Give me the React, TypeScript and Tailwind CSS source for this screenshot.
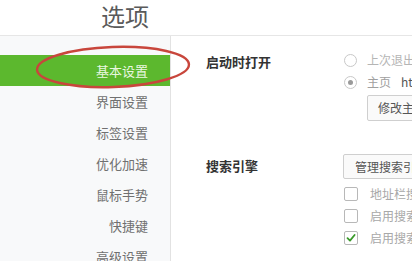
import React from "react";

const font = { fontFamily: '"Noto Sans CJK SC", "Noto Sans", sans-serif' };

const items = ["基本设置", "界面设置", "标签设置", "优化加速", "鼠标手势", "快捷键", "高级设置"];

function Radio({ checked }: { checked?: boolean }) {
  return (
    <span className="flex h-[13px] w-[13px] shrink-0 items-center justify-center rounded-full border border-[#c8c8c8] bg-white">
      {checked && <span className="h-[5px] w-[5px] rounded-full bg-[#9a9a9a]" />}
    </span>
  );
}

function Check({ checked }: { checked?: boolean }) {
  return (
    <span className="flex h-[14px] w-[14px] shrink-0 items-center justify-center rounded-[2px] border border-[#b8b8b8] bg-white">
      {checked && (
        <svg width="10" height="10" viewBox="0 0 10 10">
          <path d="M1.5 5.2 L4 7.6 L8.6 2" fill="none" stroke="#3a9a2a" strokeWidth="1.8" strokeLinecap="round" strokeLinejoin="round" />
        </svg>
      )}
    </span>
  );
}

export default function App() {
  return (
    <div className="relative h-[261px] w-[412px] overflow-hidden whitespace-nowrap bg-white" style={font}>
      <div className="h-[36px] border-b border-[#e6e6e6] pl-[101px] pt-[1px] text-[24px] leading-[30px] text-[#5a5a5a]">
        选项
      </div>
      <div className="flex h-[225px]">
        <div className="w-[171px] shrink-0 border-r border-[#e2e2e2] bg-[#f8f9fa] pt-[19px]">
          {items.map((t, i) => (
            <div
              key={t}
              className={
                i === 0
                  ? "flex h-[31px] items-center justify-end bg-[#5cb82e] pr-[22px] text-[13px] text-[#eaf7e0]"
                  : "flex h-[31px] items-center justify-end pr-[22px] text-[13px] text-[#707070]"
              }
            >
              {t}
            </div>
          ))}
        </div>
        <div className="flex-1 pl-[35px] pt-[13px] text-[12px]">
          <div className="flex">
            <div className="w-[138px] pt-[3px] text-[13px] font-bold leading-[20px] text-[#333]">启动时打开</div>
            <div className="flex flex-col">
              <div className="flex h-[22px] items-center gap-[10px]">
                <Radio />
                <span className="text-[#b5b5b5]">上次退出时的页面</span>
              </div>
              <div className="flex h-[22px] items-center gap-[10px]">
                <Radio checked />
                <span className="text-[#a0a0a0]">主页</span>
                <span className="text-[#555]">http://www.hao123.com</span>
              </div>
              <div className="mt-[2px] ml-[23px] flex h-[26px] items-center rounded-[2px] border border-[#cfcfcf] bg-[#fafafa] px-[10px] text-[#555]">
                修改主页
              </div>
            </div>
          </div>
          <div className="mt-[33px] flex">
            <div className="w-[137px] pt-[2px] text-[13px] font-bold leading-[20px] text-[#333]">搜索引擎</div>
            <div className="flex flex-col">
              <div className="flex h-[25px] items-center rounded-[2px] border border-[#cfcfcf] bg-[#fafafa] px-[11px] text-[#555]">
                管理搜索引擎
              </div>
              <div className="mt-[4px] flex h-[22px] items-center gap-[12px] pl-[1px]">
                <Check />
                <span className="text-[#a8a8a8]">地址栏搜索</span>
              </div>
              <div className="flex h-[22px] items-center gap-[12px] pl-[1px]">
                <Check />
                <span className="text-[#a8a8a8]">启用搜索建议</span>
              </div>
              <div className="flex h-[22px] items-center gap-[12px] pl-[1px]">
                <Check checked />
                <span className="text-[#a8a8a8]">启用搜索联想</span>
              </div>
            </div>
          </div>
        </div>
      </div>
      <svg className="pointer-events-none absolute left-0 top-0" width="412" height="261">
        <ellipse cx="113" cy="67" rx="76" ry="20" fill="none" stroke="#c8463c" strokeWidth="2.4" transform="rotate(-2 113 67)" />
      </svg>
    </div>
  );
}
